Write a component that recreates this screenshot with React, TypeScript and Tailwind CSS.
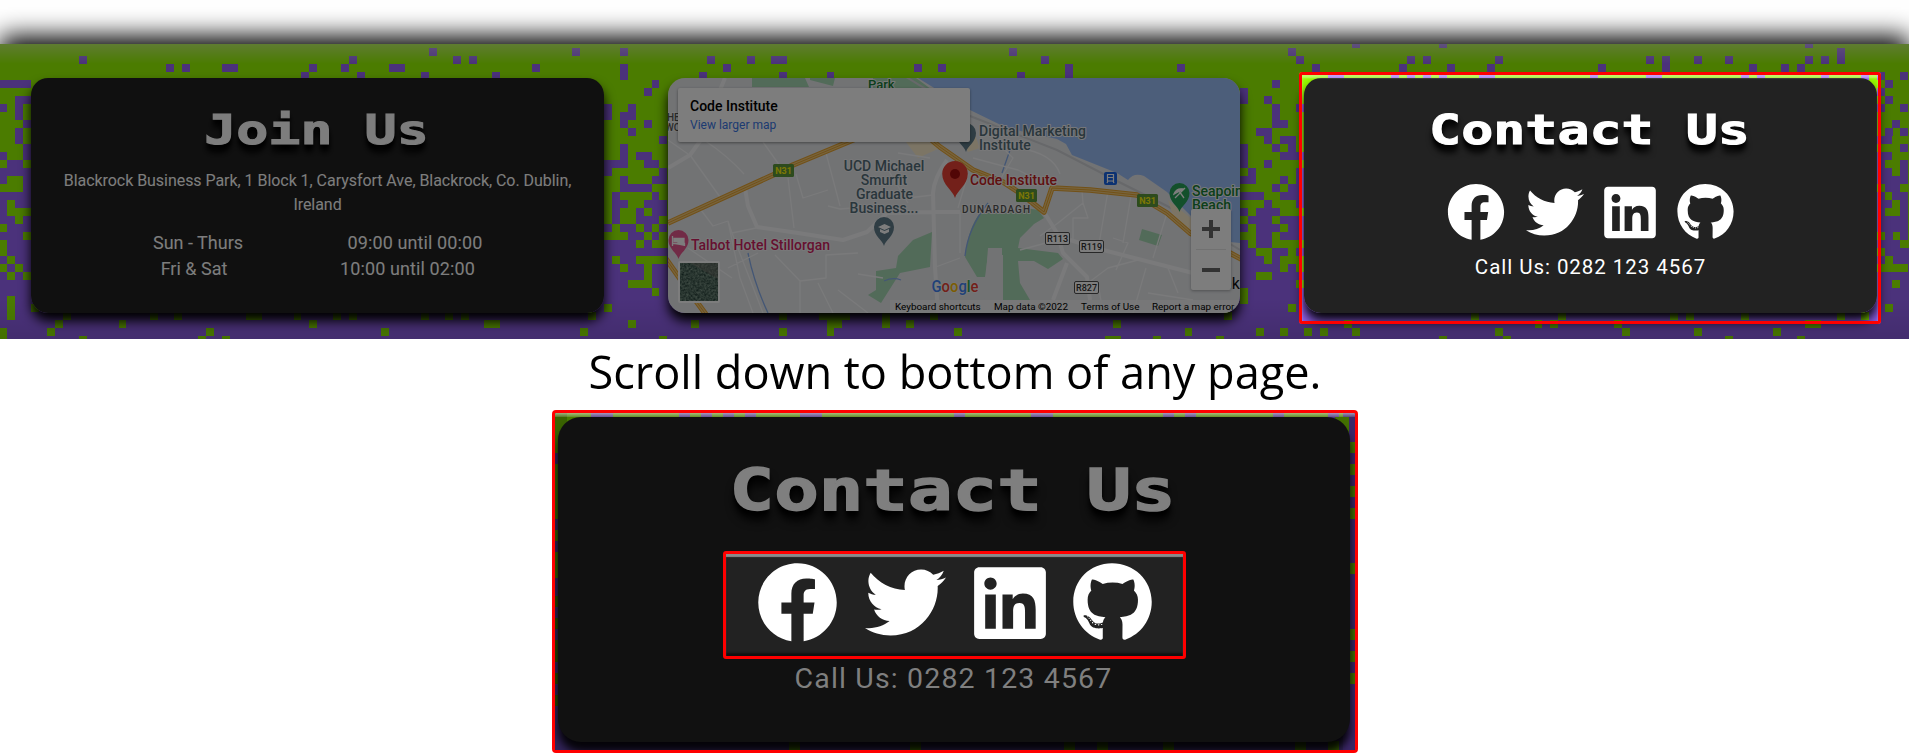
import type { ReactNode } from "react";
import { FaFacebook, FaTwitter, FaLinkedin, FaGithub } from "react-icons/fa";

/* ---------- pixel texture ---------- */

const CELL_W = 7.955;
const CELL_H = 8;
const ORIGIN_X = -0.8;
const FIRST_PURPLE_ROW = 26;

type Block = { col: number; rows: string[] };

const BLOCKS: Block[] = [
  {
    col: 0,
    rows: [
      "GGGG", "GGGG", "GGGG", "GGGG", "GGGG", "PPPP", "GGGG", "GGPP", "PGPG", "GGPG",
      "GGGP", "GGPG", "GGPG", "GGGP", "PGGP", "GPPG", "PPPP", "PGGP", "GGGP", "PPPP",
      "PGPP", "PGGG", "PPGP", "GPPP", "PPPG", "GPPP", "GPPP", "PGPP", "GPGP", "PGPG",
      "PPPP", "PPPP", "PGPP", "PGPPG", "PGPP", "PPPP", "GPPP", "GPPP",
    ],
  },
  {
    col: 76,
    rows: [
      "GGGGGGGG", "GGPGGGGG", "GGGGGGGG", "GGPGGGGG", "GGPGGGGG", "GGGGGGPG", "GGGGGPGG", "GGGGGGGG",
      "PGGPGGGG", "PGPPGGGG", "GGPGGPGG", "GGGPGGGG", "GGGGGGGP", "GGPGGGGG", "GGPGPPGG", "PPPGGPPG",
      "PGGGGGGP", "GGPGGGPP", "GGPPPPGG", "GPGGGGPG", "GPPGGPPP", "GPGGPGPP", "GPGGPPPG", "PGPPGPGP",
      "GGGPPGPG", "PPPPGPGG", "PPPPPPPP", "PGPPGGGG", "PPGPPGPP", "PPPPPGPP", "PPPGGGPP", "PPPPPPGP",
      "PPPPPPPP", "GPPPPPPP", "PPPPPPPP", "PPPGPPPP", "PPPPPPPP", "PPPPPPPG",
    ],
  },
  {
    col: 156,
    rows: [
      "GGGGGGGG", "GGGGGGPG", "GGGGGGGP", "GGGGGGGG", "GGGGGGGG", "GGGGPGGG", "PGGGGGGG", "PGGPGGGG",
      "GGGGPGGP", "GGGGPGGG", "GGGGPPGG", "GGPPGGGG", "GGGPGPPG", "PGGGPGPG", "PGGGGPPP", "PGGPGGGG",
      "GPGGGGGP", "PPGGGPGP", "GGGGPGPP", "PPPGGPPP", "GGGPGGGP", "PGPPPGGG", "GPPPGPPP", "PGPPPGPP",
      "GGPPGPPP", "PGPPGGGG", "PPGGPPGP", "PPPGPGGG", "PPPPPGPG", "PPGGPPPP", "PPPPPPPG", "GPPPPPPP",
      "GPPPPPPP", "PPPPPPGP", "PPPPPPPP", "PPPPPPPP", "PPGPPGPP", "PPPPPPPP",
    ],
  },
  {
    col: 236,
    rows: [
      "GGGG", "GGGG", "GGGG", "GGGG", "PGGP", "GPGG", "PGGG", "GPGG", "PGGP", "GGGG",
      "GGPG", "GPGP", "PPGG", "GGGP", "PPGG", "PGGP", "PPGP", "PPPP", "GPPG", "PGPP",
      "PPGP", "PGGP", "PPPP", "PPPP", "GPGP", "PPPG", "GPPP", "PGPP", "GGGG", "PPPP",
      "PPGP", "PPPP", "PPPP", "PGPP", "PPPP", "PPPP", "PPPP", "PPPP",
    ],
  },
];

/* Isolated cells along the upper and lower edges: row -> columns. */
const SPECKS: Record<number, number[]> = {
  0: [170, 181, 227],
  1: [54, 72, 127, 231],
  2: [10, 44, 57, 59, 89, 94, 97, 98, 131, 177, 179, 188, 207, 209, 213, 217, 227, 229, 231],
  3: [21, 23, 28, 29, 39, 43, 49, 50, 67, 91, 115, 118, 134, 148, 165, 176, 182, 187, 201, 209, 220, 224, 226],
  4: [38, 45, 53, 62, 88, 98, 104, 128, 134, 167, 168, 175, 177, 179, 181, 186, 187, 200, 207, 208, 219, 221, 229, 234],
  34: [8, 19, 22, 31, 32, 37, 42, 44, 53, 56, 58, 74, 98, 103, 104, 105, 106, 111, 117, 154, 185, 196, 210, 212, 219, 231, 234],
  35: [7, 15, 39, 61, 62, 87, 104, 105, 111, 114, 140, 169, 193, 195, 203, 227, 228],
  36: [6, 26, 48, 73, 98, 104, 120, 149, 164, 166, 170, 188, 204, 213, 223],
  37: [10, 25, 28, 139, 140, 145, 153, 181, 189, 217, 226],
};

function texturePath(): string {
  let d = "";
  const put = (col: number, row: number, n = 1) => {
    d += `M${(ORIGIN_X + col * CELL_W).toFixed(2)} ${row * CELL_H - 4}h${(n * CELL_W).toFixed(2)}v${CELL_H}h${(-n * CELL_W).toFixed(2)}z`;
  };
  for (const { col, rows } of BLOCKS) {
    rows.forEach((line, r) => {
      const mark = r >= FIRST_PURPLE_ROW ? "G" : "P";
      let i = 0;
      while (i < line.length) {
        let n = 0;
        while (line[i + n] === mark) n++;
        if (n > 0) put(col + i, r, n);
        i += n || 1;
      }
    });
  }
  for (const [row, cols] of Object.entries(SPECKS)) cols.forEach((c) => put(c, Number(row)));
  return d;
}

const PATH = texturePath();
const SPLIT = FIRST_PURPLE_ROW * CELL_H - 4;

function Texture() {
  return (
    <svg className="absolute inset-0" width="1909" height="295" viewBox="0 0 1909 295" shapeRendering="crispEdges" aria-hidden>
      <defs>
        <clipPath id="upper"><rect width="1909" height={SPLIT} /></clipPath>
        <clipPath id="lower"><rect y={SPLIT} width="1909" height={295 - SPLIT} /></clipPath>
      </defs>
      <rect width="1909" height={SPLIT} fill="#99fc00" />
      <rect y={SPLIT} width="1909" height={295 - SPLIT} fill="#9966fa" />
      <path d={PATH} fill="#9966fa" clipPath="url(#upper)" />
      <path d={PATH} fill="#99fc00" clipPath="url(#lower)" />
    </svg>
  );
}

/* ---------- shared pieces ---------- */

function Card({ children }: { children: ReactNode }) {
  return (
    <section className="relative h-[235px] w-[573px] overflow-hidden rounded-[17px] bg-[#222222] text-center text-white">
      {children}
    </section>
  );
}

function Heading({ children }: { children: ReactNode }) {
  return (
    <h2 className="relative right-[1px] origin-center scale-x-[1.3] font-['DejaVu_Sans_Mono',monospace] text-[41px] leading-[48px] font-bold [-webkit-text-stroke:1px_white] [text-shadow:0_8px_6px_#000,0_4px_4px_#000]">
      {children}
    </h2>
  );
}

/* ---------- map ---------- */

const N31 = "M0 145L105 97L125 87L185 62L230 42M255 55L272 69L305 92L335 104L352 115L376 134L384 110L422 112L469 117L499 135L522 155L562 175L575 182M-4 178L15 205L39 238";

const MAIN_ROADS =
  "M77 110L80 128L89 149L130 155L175 162L199 154L219 135L264 134H292M279 82Q266 100 265 115L267 189L270 235M376 134L389 155L395 175L419 199L422 222M402 162L435 172L525 195M399 185L385 222M35 59L22 77L0 90M57 0L52 12";

const SIDE_ROADS =
  "M22 77L52 119M0 62L20 76M36 62Q60 78 76 96M95 64L112 88M158 75L172 128M120 100L126 150M128 96L135 120L160 112M60 143L64 155L88 150M60 143L72 200L85 235M64 155L95 235M30 128L45 148L60 143M107 177L132 203L132 235M132 203L158 200V177L190 175M160 128L172 131L210 128M90 175L60 190M20 170L64 200M190 196L215 200M150 205L165 235M240 120L265 117M219 90L240 125M230 75L262 80M170 212L200 235M292 134V175M300 96L290 130M305 80L350 92L390 112M325 60L345 80L330 105M350 70Q385 75 392 96M414 113L415 125L390 145L372 158M415 125L420 140H405V162M440 113L430 172M463 118L455 165M445 160L460 165L448 192M499 135L485 180M420 205L440 190L470 182M465 235L478 190M500 190L510 215M435 235L430 205M480 215L525 222M378 165L352 172M292 180L265 190";

function Pin({ x, y, s = 1, fill }: { x: number; y: number; s?: number; fill: string }) {
  return (
    <path
      transform={`translate(${x} ${y}) scale(${s})`}
      d="M0 0C-1.500 -6 -10 -10 -10 -19A10 10 0 0 1 10 -19C10 -10 1.500 -6 0 0Z"
      fill={fill}
    />
  );
}

function Shield({ x, y, label }: { x: number; y: number; label: string }) {
  return (
    <g>
      <rect x={x} y={y} width="21" height="13" rx="1.5" fill="#5c9a3c" />
      <text x={x + 10.5} y={y + 10} textAnchor="middle" fontSize="9" fontWeight="700" fill="#fcf20a">{label}</text>
    </g>
  );
}

function RoadBox({ x, y, label }: { x: number; y: number; label: string }) {
  return (
    <g>
      <rect x={x} y={y} width="24" height="12" rx="1.5" fill="#ffffff" stroke="#505050" />
      <text x={x + 12} y={y + 9.5} textAnchor="middle" fontSize="9" fontWeight="500" fill="#303030">{label}</text>
    </g>
  );
}

function MapPanel() {
  return (
    <section className="relative h-[235px] w-[572px] overflow-hidden rounded-[17px] bg-[#e8eaed] font-['Roboto',sans-serif]">
      <svg className="block" width="572" height="235" viewBox="0 0 572 235" fontFamily="Roboto, sans-serif">
        <path d="M84 0H137L141 9H84ZM142 0H167L165 8L142 2ZM205 0H248L275 20H205Z" fill="#a8dab5" />
        <path d="M238 64L262 64L272 70L250 80ZM290 50L302 45L312 70L300 74Z" fill="#fdefcf" />
        <path d="M250 0L302 32L339 50L389 61L398 66L404 77L449 95L460 102Q466 94 476 98L499 114L524 139L562 164L572 165V0Z" fill="#9cc0f9" />
        <path d="M264 154L262 189L232 195L213 225L200 217L208 212V193L228 190L230 178L245 162Z" fill="#a8dab5" />
        <path d="M312 135H339L352 129L370 132L376 140L366 146L352 160L350 170L390 175L395 181L380 191L366 183H350L352 205L362 222H335V177H320L317 199H309L297 179Q300 150 312 135Z" fill="#a8dab5" />
        <path d="M474 151L494 157L490 168L471 162Z" fill="#a8dab5" />
        <path d="M320 170H334V222H316Z" fill="#e8eaed" />
        <path d="M80 175Q86 205 100 235M342 72L334 95M320 125Q300 150 297 178M216 203Q225 199 233 202" fill="none" stroke="#8ab0ee" strokeWidth="1.3" />
        <path d="M230 -6L302 38L389 72L449 103L499 128L572 172" fill="none" stroke="#d2d4d8" strokeWidth="2" />
        <path d="M500 122L524 141V156L505 138Z" fill="#fdefcf" />
        <g fill="none" stroke="#f8f9fa" strokeLinejoin="round">
          <path d={SIDE_ROADS} strokeWidth="1.300" />
          <path d={MAIN_ROADS} strokeWidth="4" />
        </g>
        <g fill="none" strokeLinejoin="round">
          <path d={N31} stroke="#e8a530" strokeWidth="5.500" />
          <path d={N31} stroke="#f3cb7c" strokeWidth="3.500" />
          <path d={N31} stroke="#e8a530" strokeWidth="1" />
        </g>

        <Shield x={105} y={86} label="N31" />
        <Shield x={348} y={111} label="N31" />
        <Shield x={469} y={116} label="N31" />
        <RoadBox x={377.500} y={154.500} label="R113" />
        <RoadBox x={411.500} y={162.500} label="R119" />
        <RoadBox x={406.500} y={203.500} label="R827" />

        <g stroke="#f4f5f6" strokeWidth="2" paintOrder="stroke" strokeLinejoin="round">
          <g fill="#546e7a" fontSize="14" fontWeight="500">
            <text x="311" y="58" textLength="107" lengthAdjust="spacingAndGlyphs">Digital Marketing</text>
            <text x="311" y="72">Institute</text>
            <g textAnchor="middle">
              <text x="216" y="93">UCD Michael</text>
              <text x="216" y="107">Smurfit</text>
              <text x="216.500" y="121">Graduate</text>
              <text x="216" y="135">Business...</text>
            </g>
          </g>
          <text x="302" y="107" fontSize="14" fontWeight="500" fill="#c5221f" textLength="87">Code Institute</text>
          <text x="23" y="172" fontSize="14" fontWeight="500" fill="#d01f62" textLength="139">Talbot Hotel Stillorgan</text>
          <text x="294" y="135" fontSize="10" fontWeight="500" fill="#555555" textLength="68">DUNARDAGH</text>
          <text x="200" y="11" fontSize="13" fontWeight="500" fill="#188038">Park</text>
          <g fill="#188038" fontSize="14" fontWeight="500">
            <text x="524" y="118">Seapoint</text>
            <text x="524" y="132">Beach</text>
          </g>
          <g fill="#555555" fontSize="10" fontWeight="500">
            <text x="-1" y="43">HE</text>
            <text x="-3" y="53">WO</text>
          </g>
        </g>
        <text x="555" y="211" fontSize="16" fill="#111111">nk</text>

        <Pin x={298} y={74} fill="#607d8b" />
        <Pin x={216} y={168} fill="#607d8b" />
        <path d="M210 149L216.500 146L223 149L216.500 152ZM212 151V154L216.500 156L221 154V151L216.500 153Z" fill="#fff" />
        <Pin x={10.500} y={181} fill="#e6588f" />
        <path d="M4.500 158V168M4.500 165.500H16.500V168M6 160.500H9V163.500H6ZM10 160.500H16V164H10Z" stroke="#fff" strokeWidth="1.300" fill="#fff" />
        <Pin x={511.500} y={134} fill="#27a35a" />
        <path d="M506 116Q508 110 515 111ZM511 113L516 120M507 120L517 110" stroke="#fff" strokeWidth="1.300" fill="#fff" />
        <Pin x={287} y={120} s={1.280} fill="#ea4335" />
        <circle cx="287" cy="96" r="5" fill="#a50e0e" />
        <rect x="436" y="94" width="13" height="13" rx="2" fill="#1a66e8" />
        <path d="M439.500 96.500H445.500V103H439.500ZM440 103L439 105M445 103L446 105M440 99.500H445" fill="none" stroke="#fff" strokeWidth="1.200" />

        <text x="263.500" y="214" fontSize="16.500" fontWeight="500" stroke="#f5f5f5" strokeWidth="1.500" paintOrder="stroke" textLength="47" lengthAdjust="spacingAndGlyphs">
          <tspan fill="#4285f4">G</tspan><tspan fill="#ea4335">o</tspan><tspan fill="#fbbc05">o</tspan><tspan fill="#4285f4">g</tspan><tspan fill="#34a853">l</tspan><tspan fill="#ea4335">e</tspan>
        </text>
      </svg>

      <div className="absolute top-[10px] left-[10px] h-[54px] w-[292px] rounded-[2px] bg-white pt-[10px] pl-3 shadow-[0_1px_3px_rgba(0,0,0,.4)]">
        <p className="text-[14px] leading-4 font-medium text-black">Code Institute</p>
        <p className="mt-[3px] text-[12px] leading-4 text-[#3b78e7]">View larger map</p>
      </div>

      <svg className="absolute top-[183px] left-[10px] rounded-[2px] border-2 border-white" width="42" height="42" viewBox="0 0 38 38">
        <filter id="grain" colorInterpolationFilters="sRGB"><feTurbulence type="fractalNoise" baseFrequency=".45" numOctaves="3" /><feColorMatrix values=".5 0 0 0 .08 .5 0 0 0 .18 .45 0 0 0 .16 0 0 0 0 1" /></filter>
        <rect width="38" height="38" filter="url(#grain)" />
        <path d="M10 0H38V16Z" fill="#76706a" opacity=".45" />
      </svg>

      <div className="absolute top-[131px] left-[523px] flex h-[81px] w-10 flex-col items-center rounded-[2px] bg-white shadow-[0_1px_3px_rgba(0,0,0,.3)]">
        <svg width="40" height="81" viewBox="0 0 40 81" stroke="#666666" strokeWidth="4">
          <path d="M11 20H29M20 11V29M11 61H29" />
          <path d="M5 40.500H35" stroke="#e6e6e6" strokeWidth="1" />
        </svg>
      </div>

      <div className="absolute right-0 bottom-0 flex h-[13px] w-[350px] bg-[#f5f5f5]/75 text-[9.900px] leading-[14px] whitespace-nowrap text-black">
        <span className="w-[99px] pl-[5px]">Keyboard shortcuts</span>
        <span className="w-[87px] pl-[5px]">Map data ©2022</span>
        <span className="w-[71px] pl-[5px]">Terms of Use</span>
        <span className="pl-[5px]">Report a map error</span>
      </div>
    </section>
  );
}

/* ---------- page ---------- */

export default function App() {
  return (
    <main className="flex h-[756px] w-[1909px] flex-col items-center overflow-hidden bg-white">
      <footer className="mt-[44px] h-[295px] w-full shrink-0 shadow-[0_-8px_24px_#000] [clip-path:inset(-44px_0_0_0)]">
        <div className="relative h-full w-full overflow-hidden">
          <Texture />
          <div className="absolute inset-x-0 top-0 h-5 bg-linear-to-b from-white/40 to-transparent" />
          <div className="absolute inset-x-0 bottom-0 h-[40px] bg-linear-to-b from-transparent to-black/10" />
          <div className="relative flex gap-16 pt-[34px] pl-[31px]">
            <div className="rounded-[17px] shadow-[0_8px_12px_#000]">
              <Card>
                <div className="pt-[28px]">
                  <Heading>Join Us</Heading>
                </div>
                <p className="mt-[15px] font-['Roboto',sans-serif] text-[16px] leading-6 tracking-[-0.045px]">
                  Blackrock Business Park, 1 Block 1, Carysfort Ave, Blackrock, Co. Dublin,
                  <br />
                  Ireland
                </p>
                <div className="mt-[13px] flex font-['Roboto',sans-serif] text-[18px] leading-[26px] whitespace-nowrap">
                  <div className="ml-[107px] w-[120px]">
                    <p>Sun - Thurs</p>
                    <p className="pr-[8px]">Fri &amp; Sat</p>
                  </div>
                  <div className="ml-[82px] w-[150px] tracking-[0.100px]">
                    <p>09:00 until 00:00</p>
                    <p className="pr-[15px]">10:00 until 02:00</p>
                  </div>
                </div>
              </Card>
            </div>
            <div className="rounded-[17px] shadow-[0_8px_12px_#000]">
              <MapPanel />
            </div>
            <div className="rounded-[17px] shadow-[0_8px_12px_#000]">
              <Card>
                <div className="pt-[28px]">
                  <Heading>Contact Us</Heading>
                </div>
                <div className="mt-[29px] flex justify-center gap-[20.500px]">
                  <FaFacebook className="h-[58px] w-[58px]" />
                  <FaTwitter className="h-[58px] w-[58px]" />
                  <FaLinkedin className="h-[59px] w-[52px]" />
                  <FaGithub className="h-[58px] w-[57px]" />
                </div>
                <p className="mt-[9px] font-['Roboto',sans-serif] text-[20.500px] leading-[32px] tracking-[0.950px]">Call Us: 0282 123 4567</p>
              </Card>
            </div>
          </div>
          <div className="absolute top-[28px] left-[1299px] h-[252px] w-[582px] rounded-[3px] border-[3px] border-[#ff0000] shadow-[0_0_0_1400px_rgba(0,0,0,.51),inset_0_3px_2px_rgba(255,255,255,.4)]" />
        </div>
      </footer>

      <h1 className="flex h-[71px] shrink-0 items-center pb-[7px] font-['Open_Sans',sans-serif] text-[46px] leading-none whitespace-nowrap text-black">
        <span className="block scale-x-[0.980]">Scroll down to bottom of any page.</span>
      </h1>

      <div className="relative h-[343px] w-[806px] shrink-0 overflow-hidden rounded-[4px] border-[3px] border-[#ff0000] bg-[#1b1430]">
        <svg className="absolute inset-0" width="800" height="337" viewBox="0 0 800 337" shapeRendering="crispEdges" aria-hidden>
          <rect width="800" height="30" fill="#4a7b00" />
          <rect y="310" width="800" height="27" fill="#33245a" />
          <rect width="12" height="165" fill="#3a6300" />
          <rect y="165" width="12" height="172" fill="#33245a" />
          <rect x="788" width="12" height="337" fill="#3b2768" />
          <path d="M36 0h22v8h-22zM124 0h11v8h-11zM146 0h11v8h-11zM168 0h11v8h-11zM190 0h11v8h-11zM245 0h22v8h-22zM399 0h11v8h-11zM476 0h22v8h-22zM608 0h11v8h-11zM630 0h11v8h-11zM718 0h11v8h-11zM773 0h11v8h-11z" fill="#4b327b" />
          <path d="M0 40h5v11h-5zM0 106h5v11h-5zM0 128h5v11h-5z" fill="#33245a" />
          <path d="M0 183h5v11h-5zM0 205h5v11h-5zM0 227h5v22h-5zM0 260h5v11h-5zM0 282h5v11h-5z" fill="#2c4a00" />
          <path d="M780 4h14v18h-14zM794 29h6v11h-6zM794 51h6v11h-6zM794 73h6v11h-6zM794 95h6v11h-6zM794 150h6v11h-6zM794 216h6v11h-6zM794 238h6v11h-6zM794 260h6v11h-6z" fill="#437000" />
          <path d="M234 328h11v9h-11zM355 328h11v9h-11zM509 328h11v9h-11zM542 328h11v9h-11zM608 328h11v9h-11zM740 328h11v9h-11zM773 328h11v9h-11z" fill="#3a6300" />
        </svg>
        <div className="absolute inset-x-0 top-0 h-1 bg-linear-to-b from-white/50 to-white/15" />
        <section className="relative mt-1 ml-[3px] flex h-[325px] w-[792px] flex-col items-center rounded-[23px] bg-[#111111] text-[#7f7f7f] shadow-[0_10px_9px_rgba(0,0,0,.9)]">
          <h2 className="relative right-[1px] mt-[39px] scale-x-[1.3] font-['DejaVu_Sans_Mono',monospace] text-[57px] leading-[68px] font-bold whitespace-nowrap [-webkit-text-stroke:1.500px_#7f7f7f] [text-shadow:0_10px_8px_#000,0_5px_4px_#000]">
            Contact Us
          </h2>
          <div className="relative left-[1px] mt-[27px] flex h-[108px] w-[463px] shrink-0 justify-center gap-[27.500px] rounded-[3px] border-[3px] border-[#ff0000] bg-[#222222] pt-[8px] text-white shadow-[inset_0_3px_1px_#8a8a8a,inset_0_-3px_2px_#111111]">
            <FaFacebook className="h-[81px] w-[81px]" />
            <FaTwitter className="h-[81px] w-[81px]" />
            <FaLinkedin className="h-[82px] w-[72px]" />
            <FaGithub className="h-[81px] w-[79px]" />
          </div>
          <p className="mt-px font-['Roboto',sans-serif] text-[28.500px] leading-[38px] tracking-[1.150px]">Call Us: 0282 123 4567</p>
        </section>
      </div>
    </main>
  );
}
